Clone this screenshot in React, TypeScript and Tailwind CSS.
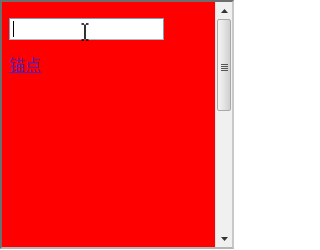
import React from "react";

export default function App() {
  return (
    <div className="w-[234px] h-[250px] bg-white">
      <div className="w-[234px] h-[249px] border-t-2 border-l-2 border-r-2 border-b-2 border-t-[#6e6e6e] border-l-[#6e6e6e] border-r-[#c8c8c8] border-b-[#b4b4b4] flex flex-row box-border">
        <div className="relative flex-1 bg-[#ff0000] pl-[7px] pt-[16px]">
          <div className="w-[155px] h-[22px] bg-white border border-[#7f9db9] border-b-[#a8b8c8] flex items-center pl-[3px]">
            <div className="w-px h-[16px] bg-black" />
          </div>
          <a
            href="#"
            className="block mt-[14px] text-[16px] leading-[20px] text-[#5c1fa6] underline w-fit"
            style={{ fontFamily: '"Noto Sans CJK SC", "Noto Sans", sans-serif' }}
          >
            锚点
          </a>
          <svg className="absolute left-[78px] top-[21px]" width="10" height="18" viewBox="0 0 10 18">
            <path d="M1.5 1h2.5M6 1h2.5M5 1.5v15M1.5 17h2.5M6 17h2.5" stroke="#000" strokeWidth="1.6" fill="none" />
          </svg>
        </div>
        <div className="w-[17px] bg-[#f0f0f0] border-l border-[#e4e4e4] flex flex-col">
          <div className="h-[17px] flex items-center justify-center">
            <svg width="7" height="4" viewBox="0 0 7 4">
              <path d="M3.5 0L7 4H0Z" fill="#333" />
            </svg>
          </div>
          <div className="mx-px h-[92px] rounded-[2px] border border-[#a8a8a8] bg-gradient-to-r from-[#f4f4f4] via-[#e4e4e4] to-[#cfcfcf] flex items-start justify-center pt-[44px]">
            <div className="flex flex-col gap-[1px]">
              <div className="w-[7px] h-px bg-[#555]" />
              <div className="w-[7px] h-px bg-[#555]" />
              <div className="w-[7px] h-px bg-[#555]" />
              <div className="w-[7px] h-px bg-[#555]" />
            </div>
          </div>
          <div className="flex-1" />
          <div className="h-[17px] flex items-center justify-center">
            <svg width="7" height="4" viewBox="0 0 7 4">
              <path d="M0 0H7L3.5 4Z" fill="#333" />
            </svg>
          </div>
        </div>
      </div>
    </div>
  );
}
